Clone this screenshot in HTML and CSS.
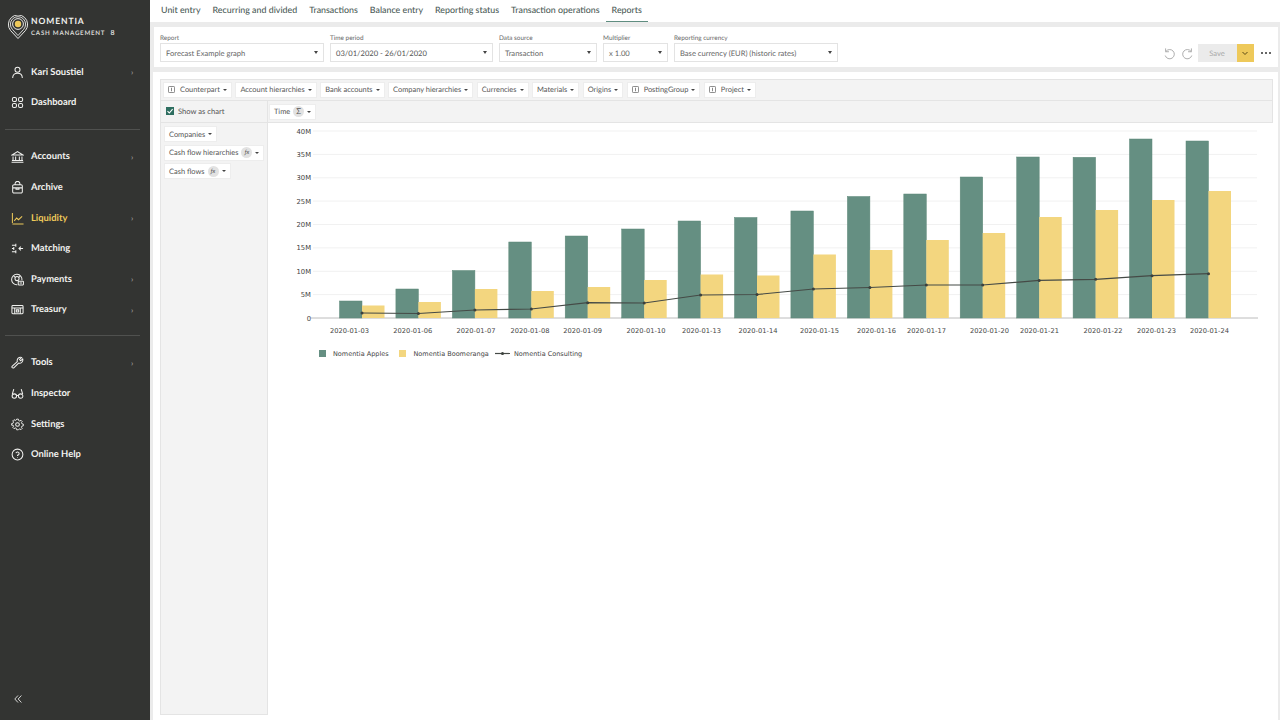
FILE: index.html
```html
<!DOCTYPE html>
<html lang="en">
<head>
<meta charset="utf-8">
<title>Nomentia Cash Management</title>
<link rel="stylesheet" href="styles.css">
</head>
<body>
<aside class="sidebar">
  <div class="brand">
    <svg class="brand-pin" viewBox="0 0 20 24" width="20" height="24">
      <path d="M10 23.5 2.6 15.6A9.6 9.6 0 1 1 17.4 15.6Z" fill="none" stroke="#e8e8e6" stroke-width="1"/>
      <path d="M10 20.5 4.4 14.4A7.6 7.6 0 1 1 15.6 14.4Z" fill="none" stroke="#e8e8e6" stroke-width=".9"/>
      <circle cx="10" cy="9" r="5.4" fill="none" stroke="#e8e8e6" stroke-width="1"/>
      <circle cx="10" cy="9" r="3.2" fill="#eec95a"/>
    </svg>
    <div class="brand-text">
      <div class="brand-name">NOMENTIA</div>
      <div class="brand-sub">CASH MANAGEMENT <span class="brand-mark">8</span></div>
    </div>
  </div>
  <nav class="nav nav-user">
    <a class="nav-item"><svg class="ico" viewBox="0 0 14 14"><circle cx="7" cy="4" r="2.7"/><path d="M1.8 13c0-3.4 2.2-5.2 5.2-5.2s5.2 1.8 5.2 5.2"/></svg><span>Kari Soustiel</span><i class="chev">›</i></a>
    <a class="nav-item"><svg class="ico" viewBox="0 0 14 14"><rect x="1.5" y="1.5" width="4.4" height="4.4" rx="1.6"/><rect x="8.1" y="1.5" width="4.4" height="4.4" rx="1.6"/><rect x="1.5" y="8.1" width="4.4" height="4.4" rx="1.6"/><rect x="8.1" y="8.1" width="4.4" height="4.4" rx="1.6"/></svg><span>Dashboard</span></a>
  </nav>
  <div class="nav-rule nav-rule-upper"></div>
  <nav class="nav">
    <a class="nav-item"><svg class="ico" viewBox="0 0 14 14"><path d="M1.2 5.4 7 1.8l5.8 3.6ZM2.2 11V7M5 11V7M9 11V7M11.8 11V7M1 11.4h12M.6 13.2h12.8"/></svg><span>Accounts</span><i class="chev">›</i></a>
    <a class="nav-item"><svg class="ico" viewBox="0 0 14 14"><path d="M4.4 4V3a2.6 2.6 0 0 1 5.2 0v1M3.2 4h7.6a1.4 1.4 0 0 1 1.4 1.4v6.2a1.4 1.4 0 0 1-1.4 1.4H3.2a1.4 1.4 0 0 1-1.4-1.4V5.400A1.4 1.4 0 0 1 3.200 4ZM1.800 7.400h10.400M5.400 7.400v1.400h3.200V7.400"/></svg><span>Archive</span></a>
    <a class="nav-item nav-active"><svg class="ico" viewBox="0 0 14 14"><path d="M1.500 1v10.800M1.500 12.800h12M3.500 9.500l2.600-3 2 1.800 3.900-3.600"/></svg><span>Liquidity</span><i class="chev">›</i></a>
    <a class="nav-item"><svg class="ico" viewBox="0 0 14 14"><path d="M1 3.400h4.200M5.200 1.800v3.200M1 7h2M3 5.400v3.200M1 10.600h4.200M5.200 9v3.200M13 7H8.600M10.600 5 8.600 7l2 2"/></svg><span>Matching</span></a>
    <a class="nav-item"><svg class="ico" viewBox="0 0 14 14"><path d="M11.800 7.800A5.600 5.600 0 1 0 6.800 12.600"/><circle cx="6.500" cy="6" r="2.200"/><rect x="7.800" y="8.800" width="5.600" height="4" rx=".6"/><path d="M9.300 10.800h2.600M3 3.500l1.500 1M10 3.500 8.500 4.500"/></svg><span>Payments</span><i class="chev">›</i></a>
    <a class="nav-item"><svg class="ico" viewBox="0 0 14 14"><rect x="1" y="2.800" width="12" height="8.800" rx="1"/><path d="M1 5.400h12M4 5.400v6.200M10 5.400v6.200M5.800 7.400h2.400v2.400H5.800Z"/></svg><span>Treasury</span><i class="chev">›</i></a>
  </nav>
  <div class="nav-rule"></div>
  <nav class="nav">
    <a class="nav-item"><svg class="ico" viewBox="0 0 14 14"><path d="M1.400 11 6.800 6a3.600 3.600 0 0 1 4.600-4.400L9.200 3.800l1.200 1.400 2.200-2A3.600 3.600 0 0 1 8.200 7.700L3 12.700a1.100 1.100 0 0 1-1.600-1.700Z"/></svg><span>Tools</span><i class="chev">›</i></a>
    <a class="nav-item"><svg class="ico" viewBox="0 0 14 14"><path d="M3 2.200 1.400 7.600M11 2.200l1.600 5.400M6 9.800a2.400 2.400 0 1 1-4.800 0 2.400 2.400 0 0 1 4.800 0ZM12.800 9.800a2.400 2.400 0 1 1-4.800 0 2.400 2.400 0 0 1 4.800 0ZM6 9.200h2"/></svg><span>Inspector</span></a>
    <a class="nav-item"><svg class="ico" viewBox="0 0 14 14"><circle cx="7" cy="7" r="2"/><path d="M6 1h2l.4 1.700 1.300.6 1.500-.9 1.400 1.400-.9 1.500.6 1.300 1.700.4v2l-1.700.4-.6 1.300.9 1.500-1.400 1.400-1.500-.9-1.300.6L8 13.800H6l-.4-1.700-1.300-.6-1.500.9-1.400-1.400.9-1.500-.6-1.300L0 8.300v-2l1.700-.4.6-1.300-.9-1.500 1.400-1.400 1.500.9 1.300-.6Z" transform="translate(.7 .3) scale(.9)"/></svg><span>Settings</span></a>
    <a class="nav-item"><svg class="ico" viewBox="0 0 14 14"><circle cx="7" cy="7" r="5.800"/><path d="M5.300 5.600A1.750 1.750 0 1 1 7 7.700v.9M7 10v.5"/></svg><span>Online Help</span></a>
  </nav>
  <svg class="collapse" viewBox="0 0 8 8" width="8" height="8"><path d="M4 .5.8 4 4 7.500M7.400.5 4.200 4l3.200 3.500"/></svg>
</aside>

<main class="main">
  <div class="tabs">
    <a class="tab">Unit entry</a>
    <a class="tab">Recurring and divided</a>
    <a class="tab">Transactions</a>
    <a class="tab">Balance entry</a>
    <a class="tab">Reporting status</a>
    <a class="tab">Transaction operations</a>
    <a class="tab tab-active">Reports</a>
  </div>

  <div class="filters">
    <label class="field w-report"><span class="field-label">Report</span><span class="select">Forecast Example graph<i class="caret"></i></span></label>
    <label class="field w-period"><span class="field-label">Time period</span><span class="select select-strong">03/01/2020 - 26/01/2020<i class="caret"></i></span></label>
    <label class="field w-source"><span class="field-label">Data source</span><span class="select">Transaction<i class="caret"></i></span></label>
    <label class="field w-mult"><span class="field-label">Multiplier</span><span class="select">x 1.00<i class="caret"></i></span></label>
    <label class="field w-curr"><span class="field-label">Reporting currency</span><span class="select">Base currency (EUR) (historic rates)<i class="caret"></i></span></label>
    <div class="actions">
      <svg class="hist" viewBox="0 0 14 14"><path d="M2.800 1.500v3.600h3.600M3 5a5 5 0 1 1-.6 4.200"/></svg>
      <svg class="hist hist-redo" viewBox="0 0 14 14"><path d="M11.200 1.500v3.600H7.600M11 5a5 5 0 1 0 .6 4.200"/></svg>
      <div class="save-group">
        <span class="save">Save</span>
        <span class="save-more"><svg viewBox="0 0 8 8" width="8" height="8"><path d="M1.500 3 4 5.500 6.500 3" fill="none" stroke="#5b4a14" stroke-width="1"/></svg></span>
      </div>
      <div class="dots"><i></i><i></i><i></i></div>
    </div>
  </div>

  <section class="panel">
    <div class="pivot">
      <div class="pivot-cols">
        <span class="chip"><svg class="info" viewBox="0 0 8 8"><rect x=".5" y=".5" width="7" height="7" rx="1"/><path d="M4 2v4"/></svg>Counterpart<i class="caret-sm"></i></span>
        <span class="chip">Account hierarchies<i class="caret-sm"></i></span>
        <span class="chip">Bank accounts<i class="caret-sm"></i></span>
        <span class="chip">Company hierarchies<i class="caret-sm"></i></span>
        <span class="chip">Currencies<i class="caret-sm"></i></span>
        <span class="chip">Materials<i class="caret-sm"></i></span>
        <span class="chip">Origins<i class="caret-sm"></i></span>
        <span class="chip"><svg class="info" viewBox="0 0 8 8"><rect x=".5" y=".5" width="7" height="7" rx="1"/><path d="M4 2v4"/></svg>PostingGroup<i class="caret-sm"></i></span>
        <span class="chip"><svg class="info" viewBox="0 0 8 8"><rect x=".5" y=".5" width="7" height="7" rx="1"/><path d="M4 2v4"/></svg>Project<i class="caret-sm"></i></span>
      </div>
      <div class="pivot-check">
        <span class="check"><svg viewBox="0 0 8 8" width="8" height="8"><path d="M1.500 4.200 3.300 6l3.300-3.800" fill="none" stroke="#fff" stroke-width="1.100"/></svg></span>
        Show as chart
      </div>
      <div class="pivot-time">
        <span class="chip">Time<b class="badge">Σ</b><i class="caret-sm"></i></span>
      </div>
      <div class="pivot-rows">
        <span class="chip">Companies<i class="caret-sm"></i></span>
        <span class="chip">Cash flow hierarchies<b class="badge badge-fx">ƒx</b><i class="caret-sm"></i></span>
        <span class="chip">Cash flows<b class="badge badge-fx">ƒx</b><i class="caret-sm"></i></span>
      </div>
      <div class="chart">
        <svg class="chart-svg" viewBox="268 123 1005 240" width="1005" height="240">
          <g class="grid">
            <path d="M313 131H1257M313 154.400H1257M313 177.800H1257M313 201.100H1257M313 224.500H1257M313 247.900H1257M313 271.300H1257M313 294.600H1257"/>
          </g>
          <path class="axis" d="M311 318H1258"/>
          <g class="ylab">
            <text x="311" y="133.500">40M</text>
            <text x="311" y="156.900">35M</text>
            <text x="311" y="180.300">30M</text>
            <text x="311" y="203.600">25M</text>
            <text x="311" y="227">20M</text>
            <text x="311" y="250.400">15M</text>
            <text x="311" y="273.800">10M</text>
            <text x="311" y="297.100">5M</text>
            <text x="311" y="320.500">0</text>
          </g>
          <g class="bar-a">
            <rect x="339.500" y="301" width="22.500" height="17"/>
            <rect x="395.900" y="289" width="22.500" height="29"/>
            <rect x="452.400" y="270.500" width="22.500" height="47.500"/>
            <rect x="508.800" y="242" width="22.500" height="76"/>
            <rect x="565.200" y="236" width="22.500" height="82"/>
            <rect x="621.700" y="229" width="22.500" height="89"/>
            <rect x="678.100" y="221" width="22.500" height="97"/>
            <rect x="734.500" y="217.500" width="22.500" height="100.500"/>
            <rect x="790.900" y="211" width="22.500" height="107"/>
            <rect x="847.400" y="196.500" width="22.500" height="121.500"/>
            <rect x="903.800" y="194" width="22.500" height="124"/>
            <rect x="960.200" y="177" width="22.500" height="141"/>
            <rect x="1016.700" y="157" width="22.500" height="161"/>
            <rect x="1073.100" y="157.300" width="22.500" height="160.700"/>
            <rect x="1129.500" y="139" width="22.500" height="179"/>
            <rect x="1186" y="141" width="22.500" height="177"/>
          </g>
          <g class="bar-b">
            <rect x="362" y="305.500" width="22.500" height="12.500"/>
            <rect x="418.400" y="302" width="22.500" height="16"/>
            <rect x="474.900" y="289" width="22.500" height="29"/>
            <rect x="531.300" y="291" width="22.500" height="27"/>
            <rect x="587.700" y="287" width="22.500" height="31"/>
            <rect x="644.200" y="280" width="22.500" height="38"/>
            <rect x="700.600" y="274.500" width="22.500" height="43.500"/>
            <rect x="757" y="275.500" width="22.500" height="42.500"/>
            <rect x="813.400" y="254.500" width="22.500" height="63.500"/>
            <rect x="869.900" y="250" width="22.500" height="68"/>
            <rect x="926.300" y="240" width="22.500" height="78"/>
            <rect x="982.700" y="233" width="22.500" height="85"/>
            <rect x="1039.200" y="217" width="22.500" height="101"/>
            <rect x="1095.600" y="210" width="22.500" height="108"/>
            <rect x="1152" y="200" width="22.500" height="118"/>
            <rect x="1208.500" y="191" width="22.500" height="127"/>
          </g>
          <polyline class="line" points="362,313 418.400,313.500 474.900,310 531.300,309 587.700,302.700 644.200,303 700.600,295 757,294.500 813.400,289 869.900,287.500 926.300,285 982.700,285 1039.200,280.400 1095.600,279.300 1152,275.700 1208.500,273.700"/>
          <g class="dots-g">
            <circle cx="362" cy="313" r="1.500"/><circle cx="418.400" cy="313.500" r="1.500"/><circle cx="474.900" cy="310" r="1.500"/><circle cx="531.300" cy="309" r="1.500"/><circle cx="587.700" cy="302.700" r="1.500"/><circle cx="644.200" cy="303" r="1.500"/><circle cx="700.600" cy="295" r="1.500"/><circle cx="757" cy="294.500" r="1.500"/><circle cx="813.400" cy="289" r="1.500"/><circle cx="869.900" cy="287.500" r="1.500"/><circle cx="926.300" cy="285" r="1.500"/><circle cx="982.700" cy="285" r="1.500"/><circle cx="1039.200" cy="280.400" r="1.500"/><circle cx="1095.600" cy="279.300" r="1.500"/><circle cx="1152" cy="275.700" r="1.500"/><circle cx="1208.500" cy="273.700" r="1.500"/>
          </g>
          <g class="xlab">
            <text x="349.500" y="332.500">2020-01-03</text>
            <text x="412.800" y="332.500">2020-01-06</text>
            <text x="476" y="332.500">2020-01-07</text>
            <text x="530" y="332.500">2020-01-08</text>
            <text x="582.700" y="332.500">2020-01-09</text>
            <text x="646" y="332.500">2020-01-10</text>
            <text x="701.500" y="332.500">2020-01-13</text>
            <text x="758" y="332.500">2020-01-14</text>
            <text x="819.500" y="332.500">2020-01-15</text>
            <text x="876.500" y="332.500">2020-01-16</text>
            <text x="926.500" y="332.500">2020-01-17</text>
            <text x="989.500" y="332.500">2020-01-20</text>
            <text x="1039.500" y="332.500">2020-01-21</text>
            <text x="1103" y="332.500">2020-01-22</text>
            <text x="1156.500" y="332.500">2020-01-23</text>
            <text x="1209.500" y="332.500">2020-01-24</text>
          </g>
          <g class="legend">
            <rect class="lg-a" x="319" y="350" width="7" height="7"/>
            <text x="333" y="356">Nomentia Apples</text>
            <rect class="lg-b" x="399" y="350" width="7" height="7"/>
            <text x="413.500" y="356">Nomentia Boomeranga</text>
            <path class="line" d="M495 353.500H510"/>
            <circle class="lg-dot" cx="502.500" cy="353.500" r="1.500"/>
            <text x="514" y="356">Nomentia Consulting</text>
          </g>
        </svg>
      </div>
    </div>
  </section>
</main>
</body>
</html>
```
FILE: styles.css
```css
* { box-sizing: border-box; }
html, body { height: 100%; }
body {
  margin: 0;
  height: 720px;
  overflow: hidden;
  display: flex;
  font-family: Lato, "Liberation Sans", sans-serif;
  text-rendering: geometricPrecision;
  background: #ebebeb;
}

/* Sidebar */
.sidebar {
  width: 150px;
  flex: none;
  background: #333432;
  color: #f1f1ef;
  position: relative;
  padding-top: 15px;
}
.brand { display: flex; gap: 3px; padding-left: 8px; height: 42px; }
.brand-pin { flex: none; }
.brand-text { padding-top: 1px; }
.brand-name { font-size: 8.5px; font-weight: 700; letter-spacing: .9px; line-height: 11px; }
.brand-sub { font-size: 6.200px; font-weight: 700; letter-spacing: .75px; line-height: 9px; margin-top: 2px; color: #d8d8d6; white-space: nowrap; }
.brand-mark { margin-left: 3px; font-size: 7px; }
.nav { display: flex; flex-direction: column; }
.nav-item {
  height: 30.600px;
  display: flex;
  align-items: center;
  gap: 7px;
  padding-left: 11px;
  font-size: 9.400px;
  font-weight: 700;
  position: relative;
}
.nav-active { color: #eec95a; }
.ico {
  width: 13px;
  height: 13px;
  flex: none;
  fill: none;
  stroke: currentColor;
  stroke-width: 1.100;
}
.chev {
  position: absolute;
  left: 131px;
  top: 10px;
  font-style: normal;
  font-size: 8px;
  font-weight: 400;
  color: #a5a5a3;
}
.nav-rule { height: 1px; background: #50514f; margin: 9.700px 10px 11.700px 5px; }
.nav-rule-upper { margin-top: 10.800px; }
.collapse {
  position: absolute;
  left: 14px;
  bottom: 17px;
  fill: none;
  stroke: #e8e8e6;
  stroke-width: .9;
}

/* Main */
.main { flex: 1; min-width: 0; display: flex; flex-direction: column; }
.tabs { height: 22px; background: #fff; display: flex; padding-left: 5px; }
.tab {
  padding: 0 6px;
  font-size: 8.850px;
  line-height: 20px;
  font-weight: 500;
  color: #4d5c58;
  height: 22px;
  white-space: nowrap;
}
.tab-active { border-bottom: 1px solid #5f8d80; }

.filters {
  margin: 5px 2px 0 4px;
  height: 40px;
  background: #fff;
  display: flex;
  gap: 6px;
  padding: 7px 0 0 6px;
}
.field { display: flex; flex-direction: column; }
.field-label { font-size: 6.400px; line-height: 9px; color: #666; }
.select {
  height: 19px;
  border: 1px solid #e3e3e3;
  padding-left: 5px;
  font-size: 7.600px;
  line-height: 18px;
  color: #666;
  position: relative;
  white-space: nowrap;
}
.select-strong { color: #555; }
.caret {
  position: absolute;
  right: 5px;
  top: 7px;
  border: 2.500px solid transparent;
  border-top: 3px solid #444;
  border-bottom: 0;
}
.w-report { width: 164px; }
.w-period { width: 163px; }
.w-source { width: 98px; }
.w-mult { width: 65px; }
.w-curr { width: 164px; }
.actions { margin-left: auto; display: flex; align-items: center; height: 18px; margin-top: 10px; padding-right: 7px; }
.hist { width: 13px; height: 13px; fill: none; stroke: #a8a8a8; stroke-width: 1; margin-right: 5px; }
.hist-redo { margin-right: 4px; }
.save-group { display: flex; height: 18px; }
.save { width: 39px; background: #ebebeb; color: #a9a9a9; font-size: 7.600px; line-height: 18px; text-align: center; }
.save-more { width: 17px; background: #eec95a; display: flex; align-items: center; justify-content: center; }
.dots { display: flex; gap: 1.500px; margin-left: 7px; }
.dots i { width: 2.500px; height: 2.500px; border-radius: 50%; background: #333; }

.panel {
  margin: 5px 0 0 3px;
  flex: 1;
  min-height: 0;
  background: #fff;
  padding: 7px 5px 5px 7px;
  border-right: 2px solid #ebebeb;
}
.pivot {
  height: 100%;
  display: grid;
  grid-template-columns: 108px 1fr;
  grid-template-rows: 22px 22px 1fr;
  grid-template-areas: "cols cols" "check time" "rows chart";
}
.pivot-cols {
  grid-area: cols;
  background: #f3f3f3;
  border: 1px solid #e4e4e4;
  display: flex;
  align-items: center;
  gap: 3.500px;
  padding: 0 0 1px 2px;
}
.pivot-check {
  grid-area: check;
  background: #f3f3f3;
  border: 1px solid #e4e4e4;
  border-top: 0;
  display: flex;
  align-items: center;
  gap: 4px;
  padding: 0 0 1px 5px;
  font-size: 7.600px;
  color: #555;
}
.check { width: 8px; height: 8px; background: #2e6e60; display: block; }
.check svg { display: block; }
.pivot-time {
  grid-area: time;
  background: #f3f3f3;
  border: 1px solid #e4e4e4;
  border-top: 0;
  border-left: 0;
  display: flex;
  align-items: center;
  padding-left: 1px;
}
.pivot-rows {
  grid-area: rows;
  background: #f3f3f3;
  border: 1px solid #e4e4e4;
  border-top: 0;
  display: flex;
  flex-direction: column;
  align-items: flex-start;
  gap: 2.500px;
  padding: 3px 0 0 3px;
}
.chip {
  height: 16px;
  background: #fff;
  border: 1px solid #ededed;
  padding: 0 4px;
  display: inline-flex;
  align-items: center;
  font-size: 7.450px;
  color: #555;
  white-space: nowrap;
}
.info { width: 7px; height: 7px; margin-right: 5px; fill: none; stroke: #555; stroke-width: .8; }
.caret-sm {
  margin-left: 3px;
  border: 2px solid transparent;
  border-top: 2.500px solid #444;
  border-bottom: 0;
}
.badge {
  margin-left: 3px;
  width: 11px;
  height: 11px;
  border-radius: 50%;
  background: #e2e2e2;
  font-size: 8px;
  line-height: 11px;
  font-weight: 400;
  text-align: center;
}
.badge-fx { font-size: 6px; font-style: italic; }

/* Chart */
.chart { grid-area: chart; min-width: 0; }
.chart-svg { display: block; font-family: "DejaVu Sans", sans-serif; }
.grid path { stroke: #f1f1f1; stroke-width: 1; fill: none; }
.axis { stroke: #bcbcbc; stroke-width: 1; fill: none; }
.ylab text { font-size: 6.800px; fill: #444; text-anchor: end; }
.xlab text { font-size: 6.700px; fill: #444; text-anchor: middle; }
.bar-a rect { fill: #658f82; stroke: #5d8878; stroke-width: .5; }
.bar-b rect { fill: #f3d67f; }
.line { fill: none; stroke: #454a46; stroke-width: 1.200; }
.dots-g circle, .lg-dot { fill: #3c413d; }
.legend text { font-size: 6.500px; fill: #444; }
.lg-a { fill: #658f82; }
.lg-b { fill: #f3d67f; }
```
